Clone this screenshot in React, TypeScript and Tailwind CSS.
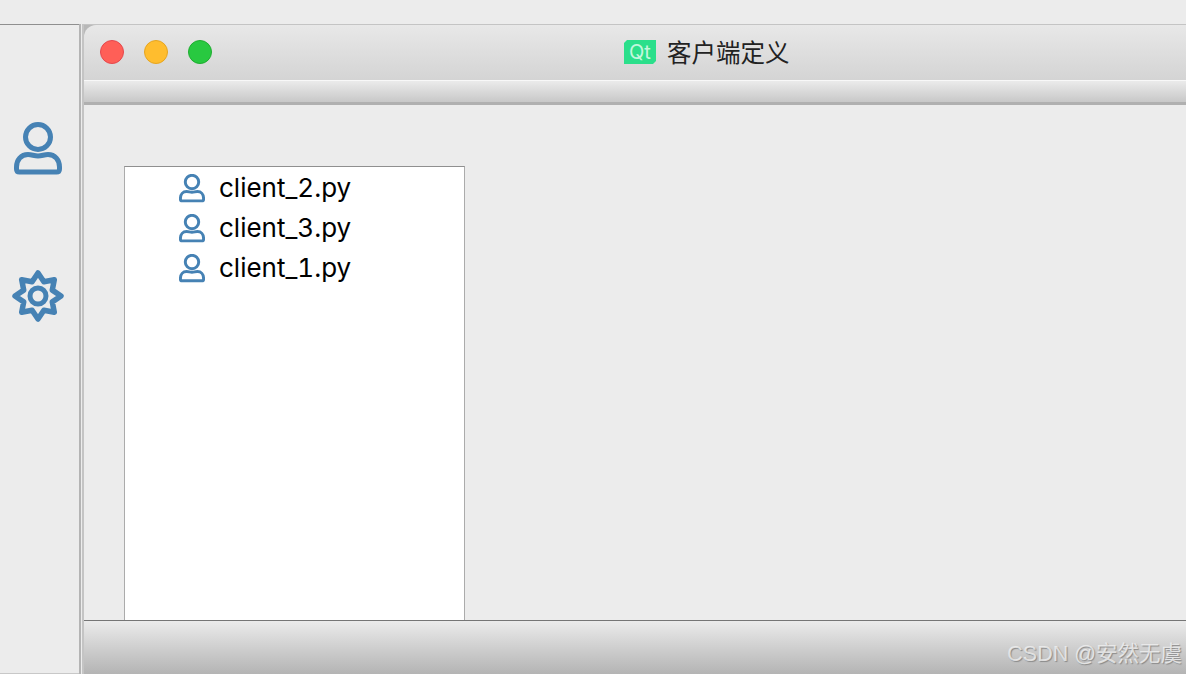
const PersonIcon = ({ className, weight = 5 }: { className: string; weight?: number }) => (
  <svg viewBox="0 0 48 54" fill="none" stroke="#4682b4" strokeWidth={weight} className={className}>
    <circle cx="24" cy="15" r="12.5" />
    <path
      d="M14 32.5 C18 32.5 20 34 24 34 C28 34 30 32.5 34 32.5 C41 32.5 45.5 38 45.5 45 V47 C45.5 49 44.5 50 42.5 50 H5.5 C3.5 50 2.5 49 2.5 47 V45 C2.5 38 7 32.5 14 32.5 Z"
      strokeLinejoin="round"
    />
  </svg>
);

const GearIcon = ({ className }: { className: string }) => (
  <svg viewBox="0 0 52 52" fill="none" stroke="#4682b4" strokeLinejoin="round" className={className}>
    <path
      strokeWidth="5.5"
      d="M26 3 L31.9 11.7 L42.3 9.7 L40.3 20.1 L49 26 L40.3 31.9 L42.3 42.3 L31.9 40.3 L26 49 L20.1 40.3 L9.7 42.3 L11.7 31.9 L3 26 L11.7 20.1 L9.7 9.7 L20.1 11.7 Z"
    />
    <circle cx="26" cy="26" r="8" strokeWidth="5" />
  </svg>
);

const clients = ["client_2.py", "client_3.py", "client_1.py"];

export default function App() {
  return (
    <div className="w-[1186px] h-[674px] overflow-hidden bg-[#ececec] flex flex-col relative font-['Inter','Noto_Sans_CJK_SC',sans-serif]">
      <div className="h-6 shrink-0" />
      <div className="flex flex-1 min-h-0">
        {/* left toolbar */}
        <div className="w-[79px] shrink-0 border-t border-b border-t-[#8f8f8f] border-b-[#c8c8c8] flex flex-col items-center pt-[97px] pr-[3px] gap-[94px]">
          <PersonIcon className="w-12 h-[54px]" />
          <GearIcon className="w-[52px] h-[52px]" />
        </div>
        <div className="w-[2px] shrink-0 bg-[#b4b4b4]" />
        <div className="w-px shrink-0 bg-[#ececec]" />
        <div className="w-[2px] shrink-0 bg-[#c4c4c4]" />

        {/* window */}
        <div className="flex-1 flex flex-col min-w-0 border-t border-[#c4c4c4]">
          <div className="h-[55px] shrink-0 bg-[#b8b8b8]">
            <div className="h-full rounded-tl-xl bg-gradient-to-b from-[#e8e8e8] to-[#d4d4d4] flex items-center relative">
              <div className="flex items-center gap-5 -mt-[1px] pl-4">
                <span className="w-6 h-6 rounded-full bg-[#ff5f57] border border-[#e5484d]" />
                <span className="w-6 h-6 rounded-full bg-[#ffbd2e] border border-[#e6a520]" />
                <span className="w-6 h-6 rounded-full bg-[#28c940] border border-[#1fad30]" />
              </div>
              <div className="absolute left-[540px] top-[13px] flex items-center gap-[11px]">
                <div className="w-8 h-6 bg-[#2bdf8b] [clip-path:polygon(3px_0,100%_0,100%_calc(100%-3px),calc(100%-3px)_100%,0_100%,0_3px)] text-[#c4f7de] text-[20px] leading-6 text-center">
                  Qt
                </div>
                <span className="text-[24.5px] leading-7 text-[#222222] font-['Noto_Sans_CJK_SC',sans-serif]">
                  客户端定义
                </span>
              </div>
            </div>
          </div>
          <div className="h-[25px] shrink-0 border-t border-[#f8f8f8] border-b-[3px] border-b-[#b0b0b0] bg-gradient-to-b from-[#ebebeb] to-[#c8c8c8]" />

          <div className="flex-1 min-h-0 pl-10 pt-[61px]">
            <div className="w-[341px] h-full bg-white border border-b-0 border-[#ababab] border-t-[#8f8f8f] pt-[1px]">
              {clients.map((name) => (
                <div key={name} className="h-10 flex items-center pl-[54px] gap-[14px]">
                  <PersonIcon className="w-[26px] h-[29px]" weight={5.5} />
                  <span className="text-[26px] text-black leading-none tabular-nums">{name}</span>
                </div>
              ))}
            </div>
          </div>

          <div className="h-[54px] shrink-0 border-t border-[#757575] bg-gradient-to-b from-[#ebebeb] to-[#b4b4b4]" />
        </div>
      </div>

      <span className="absolute right-[4px] top-[639px] text-[21.5px] leading-[30px] text-[#f2f2f2]/80 [text-shadow:1px_1px_1px_#8a8a8a] font-['Liberation_Sans','Noto_Sans_CJK_SC',sans-serif]">
        CSDN @安然无虞
      </span>
    </div>
  );
}
